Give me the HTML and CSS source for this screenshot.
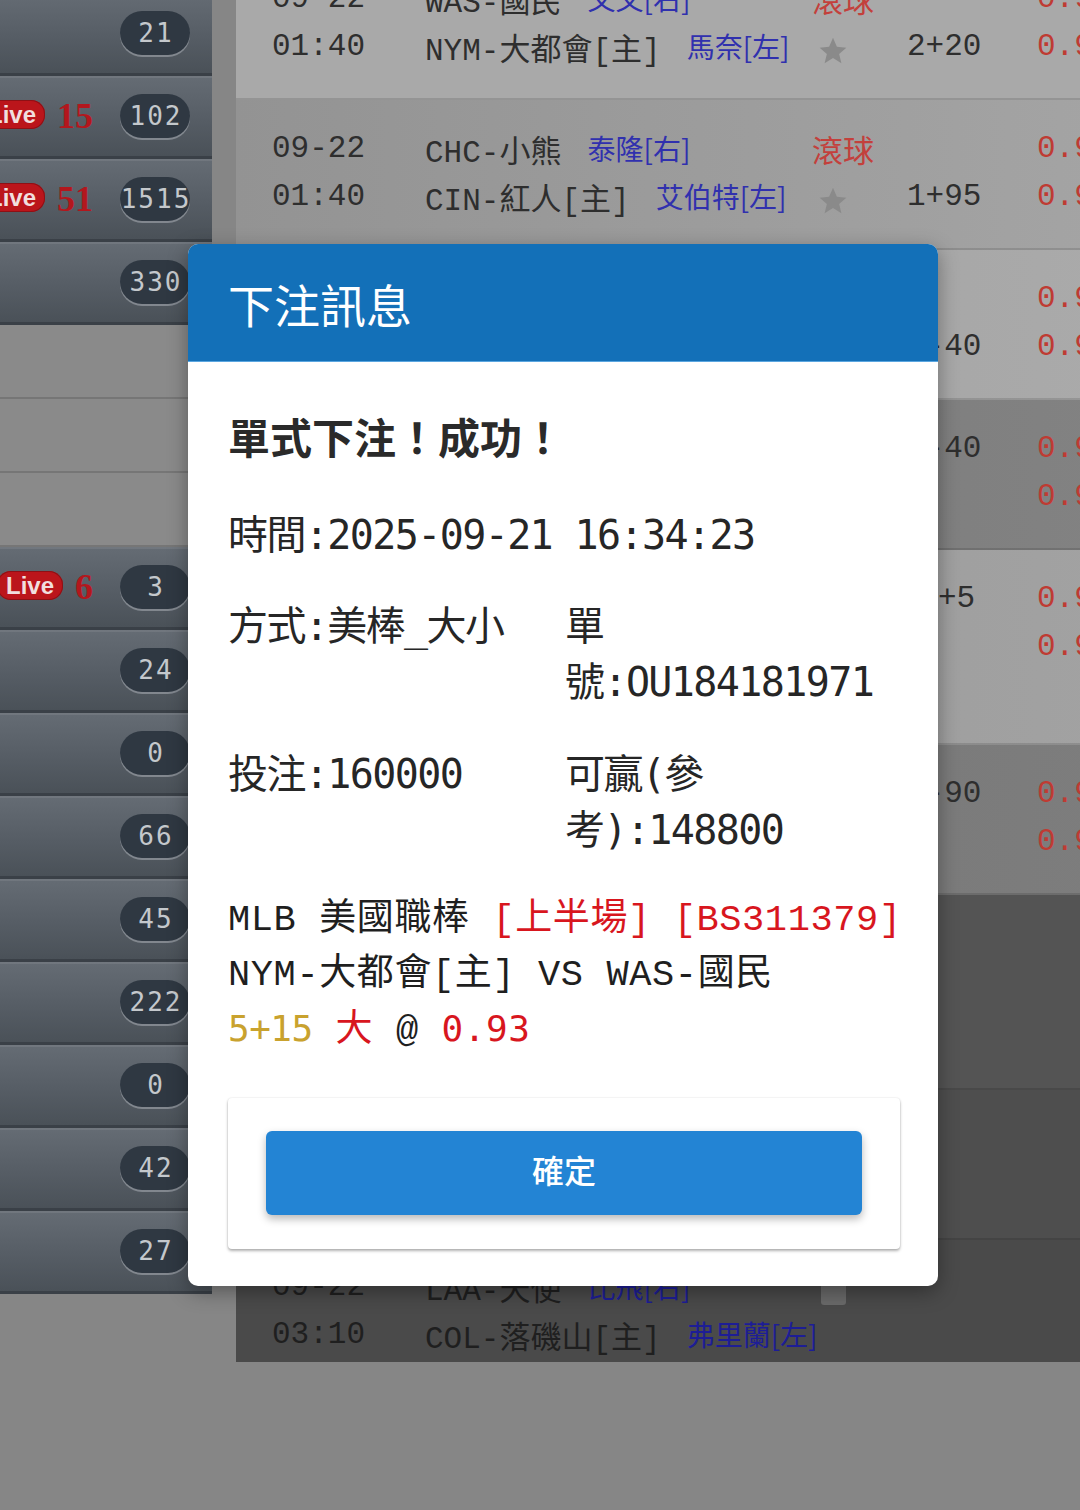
FILE: index.html
```html
<!DOCTYPE html>
<html lang="zh-Hant">
<head>
<meta charset="utf-8">
<title>下注訊息</title>
<link rel="stylesheet" href="styles.css">
</head>
<body>
<div class="page">
  <aside class="sidebar">
    <div class="srow"><span class="pill">21</span></div>
    <div class="srow"><span class="live">Live</span><span class="num">15</span><span class="pill">102</span></div>
    <div class="srow"><span class="live">Live</span><span class="num">51</span><span class="pill">1515</span></div>
    <div class="srow"><span class="pill">330</span></div>
    <div class="srow light"></div>
    <div class="srow light"></div>
    <div class="srow light"></div>
    <div class="srow"><span class="live">Live</span><span class="num">6</span><span class="pill">3</span></div>
    <div class="srow"><span class="pill">24</span></div>
    <div class="srow"><span class="pill">0</span></div>
    <div class="srow"><span class="pill">66</span></div>
    <div class="srow"><span class="pill">45</span></div>
    <div class="srow"><span class="pill">222</span></div>
    <div class="srow"><span class="pill">0</span></div>
    <div class="srow"><span class="pill">42</span></div>
    <div class="srow"><span class="pill">27</span></div>
  </aside>

  <main class="table">
    <div class="scrollbar"></div>

    <div class="row r-a">
      <span class="dt">09-22</span><span class="team">WAS-國民<span class="pitch">文文[右]</span></span><span class="st">滾球</span><span class="hdp"></span><span class="odds">0.93</span>
      <span class="dt">01:40</span><span class="team">NYM-大都會[主]<span class="pitch">馬奈[左]</span></span><span class="st"><svg class="star" viewBox="0 0 24 24" width="32" height="32"><path d="M12 2l2.9 6.9 7.1.6-5.4 4.7 1.7 7-6.3-3.9-6.3 3.9 1.7-7L2 9.5l7.1-.6z"/></svg></span><span class="hdp">2+20</span><span class="odds">0.93</span>
    </div>

    <div class="row r-b">
      <span class="dt">09-22</span><span class="team">CHC-小熊<span class="pitch">泰隆[右]</span></span><span class="st">滾球</span><span class="hdp"></span><span class="odds">0.93</span>
      <span class="dt">01:40</span><span class="team">CIN-紅人[主]<span class="pitch">艾伯特[左]</span></span><span class="st"><svg class="star" viewBox="0 0 24 24" width="32" height="32"><path d="M12 2l2.9 6.9 7.1.6-5.4 4.7 1.7 7-6.3-3.9-6.3 3.9 1.7-7L2 9.5l7.1-.6z"/></svg></span><span class="hdp">1+95</span><span class="odds">0.95</span>
    </div>

    <div class="row r-c">
      <span class="dt"></span><span class="team"></span><span class="st"></span><span class="hdp"></span><span class="odds">0.95</span>
      <span class="dt"></span><span class="team"></span><span class="st"></span><span class="hdp">8-40</span><span class="odds">0.93</span>
    </div>

    <div class="row r-d">
      <span class="dt"></span><span class="team"></span><span class="st"></span><span class="hdp">7-40</span><span class="odds">0.92</span>
      <span class="dt"></span><span class="team"></span><span class="st"></span><span class="hdp"></span><span class="odds">0.96</span>
    </div>

    <div class="row r-e three">
      <span class="dt"></span><span class="team"></span><span class="st"></span><span class="hdp"><span class="shift">+5</span></span><span class="odds">0.94</span>
      <span class="dt"></span><span class="team"></span><span class="st"></span><span class="hdp"></span><span class="odds">0.94</span>
      <span class="dt"></span><span class="team"></span><span class="st"></span><span class="hdp"></span><span class="odds"></span>
    </div>

    <div class="row r-f">
      <span class="dt"></span><span class="team"></span><span class="st"></span><span class="hdp">6-90</span><span class="odds">0.91</span>
      <span class="dt"></span><span class="team"></span><span class="st"></span><span class="hdp"></span><span class="odds">0.97</span>
    </div>

    <div class="row r-g three">
      <span class="dt"></span><span class="team"></span><span class="st"></span><span class="hdp"></span><span class="odds"></span>
      <span class="dt"></span><span class="team"></span><span class="st"></span><span class="hdp"></span><span class="odds"></span>
      <span class="dt"></span><span class="team"></span><span class="st"></span><span class="hdp"></span><span class="odds"></span>
    </div>

    <div class="row r-h">
      <span class="dt"></span><span class="team"></span><span class="st"></span><span class="hdp"></span><span class="odds"></span>
      <span class="dt"></span><span class="team"></span><span class="st"></span><span class="hdp"></span><span class="odds"></span>
    </div>

    <div class="row r-i">
      <span class="dt">09-22</span><span class="team">LAA-天使<span class="pitch">比飛[右]</span></span><span class="st"><span class="sq"></span></span><span class="hdp"></span><span class="odds"></span>
      <span class="dt">03:10</span><span class="team">COL-落磯山[主]<span class="pitch">弗里蘭[左]</span></span><span class="st"></span><span class="hdp"></span><span class="odds"></span>
    </div>
  </main>
</div>

<div class="modal">
  <div class="mhead">下注訊息</div>
  <div class="mbody">
    <div class="mtitle">單式下注！成功！</div>
    <div class="mline">時間:2025-09-21 16:34:23</div>
    <div class="mgrid">
      <div>方式:美棒_大小</div>
      <div>單號:OU184181971</div>
      <div>投注:160000</div>
      <div>可贏(參考):148800</div>
    </div>
    <div class="mdetail">
      <div>MLB 美國職棒 <span class="red">[上半場]</span> <span class="red">[BS311379]</span></div>
      <div>NYM-大都會[主] VS WAS-國民</div>
      <div><span class="gold">5+15</span> <span class="red">大</span> @ <span class="red sansmono">0.93</span></div>
    </div>
    <div class="mcard">
      <button class="ok" type="button">確定</button>
    </div>
  </div>
</div>
</body>
</html>
```

FILE: styles.css
```css
* {
  box-sizing: border-box;
}

html, body {
  margin: 0;
  padding: 0;
}

body {
  width: 1080px;
  height: 1510px;
  overflow: hidden;
  background: #868686;
  font-family: "Noto Sans CJK TC", "Noto Sans", sans-serif;
}

.page {
  display: flex;
  align-items: flex-start;
  margin-top: -50px;
}

/* ---------- sidebar ---------- */
.sidebar {
  width: 212px;
  flex: none;
  padding-top: 43px;
  background: #4f565d;
  overflow: hidden;
}

.srow {
  height: 83px;
  display: flex;
  align-items: center;
  justify-content: flex-end;
  padding-right: 22px;
  background: linear-gradient(to bottom, #656c74 0%, #565d65 55%, #4a5158 100%);
  border-bottom: 3px solid #3a4047;
  box-shadow: inset 0 2px 0 rgba(255, 255, 255, 0.08);
}

.srow.light {
  height: 74px;
  background: #8a8a8a;
  border-bottom: 2px solid #767676;
  box-shadow: none;
}

.pill {
  flex: none;
  width: 70px;
  height: 44px;
  margin-left: 27px;
  border-radius: 22px;
  background: #2f3842;
  box-shadow: 0 2px 0 rgba(190, 196, 202, 0.45);
  color: #c4c8cc;
  font-family: "DejaVu Sans Mono", monospace;
  font-size: 26px;
  letter-spacing: 2px;
  display: flex;
  align-items: center;
  justify-content: center;
  padding-left: 2px;
}

.live {
  flex: none;
  height: 29px;
  padding: 0 9px;
  border-radius: 14px;
  background: #bb151b;
  box-shadow: inset 0 0 0 1px #8e1015;
  color: #f1dede;
  font-family: "Liberation Sans", Arial, sans-serif;
  font-weight: 700;
  font-size: 24px;
  line-height: 29px;
  margin-top: -3px;
}

.num {
  flex: none;
  margin-left: 12px;
  color: #b3171d;
  font-family: "Liberation Serif", "Times New Roman", serif;
  font-weight: 700;
  font-size: 36px;
  line-height: 1;
}

/* ---------- table ---------- */
.table {
  position: relative;
  flex: 1;
  margin-left: 24px;
}

.scrollbar {
  position: absolute;
  right: 9px;
  top: 165px;
  width: 8px;
  height: 782px;
  border-radius: 4px;
  background: #3b3b3b;
  z-index: 2;
}

.row {
  display: grid;
  grid-template-columns: 153px 387px 95px 130px 1fr;
  grid-auto-rows: 48px;
  align-items: center;
  padding: 24px 0 28px 36px;
  border-bottom: 2px solid rgba(0, 0, 0, 0.12);
  font-family: "Liberation Mono", "Noto Sans CJK TC", monospace;
  font-size: 31px;
  color: #2e2e2e;
  white-space: nowrap;
  overflow: hidden;
}

.row.three {
  padding-bottom: 25px;
}

.r-a { background: #a9a9a9; }
.r-b { background: linear-gradient(to right, #939393, #a4a4a4); }
.r-c { background: linear-gradient(to right, #9e9e9e, #aaaaaa); }
.r-d { background: linear-gradient(to right, #767676, #828282); }
.r-e { background: linear-gradient(to right, #969696, #a2a2a2); }
.r-f { background: linear-gradient(to right, #737373, #7d7d7d); }
.r-g { background: #545454; }
.r-h { background: #4e4e4e; }
.r-i {
  background: #4a4a4a;
  padding: 22px 0 4px 36px;
  border-bottom: none;
}

.r-g, .r-h, .r-i {
  color: #1f1f1f;
}

.team {
  display: flex;
  align-items: center;
}

.pitch {
  margin-left: 26px;
  color: #3030ae;
  font-family: "Noto Sans CJK TC", sans-serif;
  font-size: 28px;
}

.r-g .pitch, .r-h .pitch, .r-i .pitch {
  color: #1d1d96;
}

.st {
  color: #c3403c;
  font-family: "Noto Sans CJK TC", sans-serif;
  font-size: 31px;
  display: flex;
  align-items: center;
}

.star {
  fill: #8a8a8a;
  margin-left: 5px;
  margin-top: 10px;
}

.sq {
  width: 25px;
  height: 25px;
  margin-left: 9px;
  margin-top: 12px;
  border-radius: 3px;
  background: #6a6a6a;
}

.shift {
  margin-left: 31px;
}

.odds {
  color: #bf3b33;
}

/* ---------- modal ---------- */
.modal {
  position: absolute;
  left: 188px;
  top: 244px;
  width: 750px;
  background: #ffffff;
  border-radius: 10px;
  overflow: hidden;
  box-shadow: 0 6px 20px rgba(0, 0, 0, 0.35);
  z-index: 10;
}

.mhead {
  height: 118px;
  display: flex;
  align-items: center;
  padding-left: 40px;
  background: #1370b8;
  border-bottom: 1px solid #5aa6e0;
  color: #ffffff;
  font-family: "Noto Sans CJK TC", sans-serif;
  font-size: 46px;
  font-weight: 400;
}

.mbody {
  padding: 46px 38px 37px 40px;
  color: #222222;
}

.mtitle {
  font-family: "Noto Sans CJK TC", sans-serif;
  font-size: 42px;
  line-height: 56px;
  font-weight: 700;
  color: #2a2a2a;
}

.mline, .mgrid {
  font-family: "DejaVu Sans Mono", "Noto Sans CJK TC", monospace;
  font-size: 40px;
  line-height: 56px;
  letter-spacing: -1.6px;
  color: #262626;
}

.mline {
  margin-top: 43px;
}

.mgrid {
  margin-top: 35px;
  display: grid;
  grid-template-columns: 337px 1fr;
  row-gap: 36px;
}

.mdetail {
  margin-top: 35px;
  font-family: "Liberation Mono", "Noto Sans CJK TC", monospace;
  font-size: 37px;
  line-height: 54.5px;
  letter-spacing: 0.6px;
  white-space: nowrap;
  color: #1f1f1f;
}

.red {
  color: #d8161e;
}

.gold {
  color: #c9a22e;
  font-family: "DejaVu Sans Mono", monospace;
  font-size: 36px;
  letter-spacing: -0.5px;
}

.sansmono {
  font-family: "DejaVu Sans Mono", monospace;
  font-size: 36px;
}

.mcard {
  margin-top: 39px;
  padding: 33px 38px 34px;
  background: #ffffff;
  border-radius: 4px;
  box-shadow: 0 2px 3px rgba(0, 0, 0, 0.3), 0 0 2px rgba(0, 0, 0, 0.12);
}

.ok {
  display: block;
  width: 100%;
  height: 84px;
  border: none;
  border-radius: 6px;
  background: #2384d4;
  box-shadow: 0 4px 8px rgba(0, 0, 0, 0.28);
  color: #ffffff;
  font-family: "Noto Sans CJK TC", sans-serif;
  font-size: 32px;
  font-weight: 500;
  padding: 0 0 8px;
  cursor: pointer;
}
```
